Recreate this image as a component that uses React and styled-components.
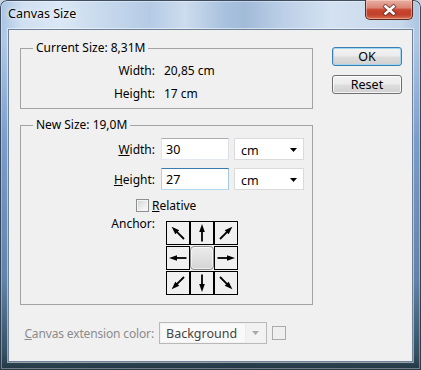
import React from "react";
import styled, { createGlobalStyle } from "styled-components";

const Global = createGlobalStyle`
  html, body { margin: 0; padding: 0; background: #c7d3df; overflow: hidden; }
  * { box-sizing: border-box; }
`;

const uiFont = `"Noto Sans", "Open Sans", "DejaVu Sans", sans-serif`;

const Window = styled.div`
  width: 421px;
  height: 370px;
  display: flex;
  flex-direction: column;
  padding: 0 8px 8px;
  border-radius: 7px 7px 0 0;
  box-shadow: inset 0 0 0 1px rgba(25, 40, 60, 0.8), inset 0 0 0 2px rgba(255, 255, 255, 0.35);
  background:
    linear-gradient(180deg, rgba(80, 120, 170, 0) 0px, rgba(80, 120, 170, 0) 40px,
      rgba(55, 105, 175, 0.45) 140px, rgba(45, 85, 130, 0.6) 280px,
      rgba(35, 62, 78, 0.88) 355px, rgba(25, 45, 55, 0.95) 370px),
    linear-gradient(90deg, #a8c3e2 0px, #cfdff1 22px, #dae7f5 60px, #c4d7ec 110px,
      #b5cbe5 150px, #cddcee 185px, #a8c1de 225px, #a2bbd9 245px, #bdd0e8 285px,
      #d3e1f1 330px, #c8d8eb 400px, #a9c3e0 421px);
`;

const TitleBar = styled.div`
  height: 29px;
  display: flex;
  justify-content: space-between;
  align-items: flex-start;
`;

const Title = styled.div`
  padding-top: 6px;
  font-family: ${uiFont};
  font-size: 12.5px;
  line-height: 15px;
  color: #000;
  text-shadow: 0 0 6px rgba(255, 255, 255, 0.95), 0 0 2px #fff;
`;

const CloseButton = styled.div`
  width: 48px;
  height: 20px;
  display: flex;
  align-items: center;
  justify-content: center;
  border: 1px solid #5a2a22;
  border-top: none;
  border-radius: 0 0 5px 5px;
  background: linear-gradient(180deg, #e9b0a3 0%, #db8676 40%, #c8452f 52%, #c2412c 78%, #d8704f 100%);
  box-shadow: inset 0 0 0 1px rgba(255, 220, 210, 0.45);
`;

const Client = styled.div`
  flex: 1;
  display: flex;
  flex-direction: column;
  background: #f0f0f0;
  border: 1px solid #6d8199;
  box-shadow: 0 0 0 1px rgba(255, 255, 255, 0.5);
  padding: 11px 10px 0 11px;
  font-family: ${uiFont};
  font-size: 12px;
  line-height: 15px;
  color: #000;
`;

const TopArea = styled.div`
  display: flex;
  align-items: flex-start;
`;

const LeftColumn = styled.div`
  width: 293px;
  display: flex;
  flex-direction: column;
  gap: 9px;
`;

const Group = styled.fieldset`
  margin: 0;
  min-width: 0;
  width: 293px;
  border: 1px solid #a3a3a3;
  padding: ${(p) => p.$pad};
`;

const Legend = styled.legend`
  margin-left: 12px;
  padding: 0 3px;
  line-height: 14px;
`;

const InfoRow = styled.div`
  display: flex;
  align-items: center;
  height: 23px;
`;

const RowLabel = styled.div`
  width: 134px;
  flex: none;
  text-align: right;
  letter-spacing: ${(p) => (p.$disabled ? "-0.15px" : "0")};
  color: ${(p) => (p.$disabled ? "#8c8c8c" : "#000")};
`;

const InfoValue = styled.div`
  margin-left: 9px;
`;

const FieldRow = styled.div`
  display: flex;
  align-items: center;
  height: 22px;
  margin-top: ${(p) => p.$top || 0}px;
`;

const TextBox = styled.input`
  width: 68px;
  height: 22px;
  margin: 0 0 0 6px;
  padding: 0 4px;
  font: inherit;
  font-size: 12.5px;
  color: #000;
  background: #fff;
  outline: none;
  border: 1px solid;
  border-color: ${(p) =>
    p.$focused ? "#3d7bad #a4c9e3 #b7d9ed #b5cfe7" : "#abadb3 #dbdfe6 #e3e9ef #e2e3ea"};
`;

const Combo = styled.div`
  width: 70px;
  height: 22px;
  margin-left: 5px;
  display: flex;
  align-items: center;
  justify-content: space-between;
  padding: 2px 6px 0 6px;
  font-size: 12.5px;
  background: #fff;
  border: 1px solid #dadada;
`;

const CheckRow = styled.div`
  display: flex;
  align-items: center;
  height: 16px;
  margin-top: 7px;
  padding-left: 115px;
  gap: 3px;
`;

const CheckBox = styled.span`
  width: 13px;
  height: 13px;
  border: 1px solid #8e8f8f;
  background: linear-gradient(135deg, #cfd1d4 0%, #eeeeee 60%, #fbfbfb 100%);
  box-shadow: inset 0 0 0 1px #f4f4f4;
`;

const AnchorRow = styled.div`
  display: flex;
  align-items: flex-start;
  margin-top: 3px;
`;

const AnchorGrid = styled.div`
  margin: 5px 0 0 11px;
  display: grid;
  grid-template-columns: repeat(3, 24px);
  grid-auto-rows: 24px;
  row-gap: 1px;
`;

const AnchorCell = styled.div`
  display: flex;
  align-items: center;
  justify-content: center;
  border: 1px solid ${(p) => (p.$selected ? "#8a8a8a" : "#000")};
  border-radius: ${(p) => (p.$selected ? "4px" : "0")};
  background: ${(p) =>
    p.$selected ? "linear-gradient(180deg, #ececec 0%, #dedede 60%, #d4d4d4 100%)" : "#f0f0f0"};
  box-shadow: ${(p) => (p.$selected ? "inset 0 0 0 1px rgba(255,255,255,0.6)" : "none")};
`;

const RightColumn = styled.div`
  margin: 6px 0 0 19px;
  display: flex;
  flex-direction: column;
  gap: 9px;
`;

const Button = styled.button`
  width: 70px;
  height: 19px;
  padding: 0;
  font: inherit;
  font-size: 12.5px;
  line-height: 15px;
  color: #000;
  border-radius: 3px;
  border: 1px solid ${(p) => (p.$default ? "#3c7fb1" : "#707070")};
  background: linear-gradient(180deg, #f3f3f3 0%, #ebebeb 48%, #dddddd 52%, #d0d0d0 100%);
  box-shadow: inset 0 0 0 1px ${(p) => (p.$default ? "#9fd7f3" : "rgba(255,255,255,0.75)")};
`;

const BottomRow = styled.div`
  display: flex;
  align-items: center;
  height: 22px;
  margin-top: 17px;
`;

const DisabledCombo = styled.div`
  width: 108px;
  height: 22px;
  margin-left: 5px;
  display: flex;
  align-items: stretch;
  padding: 1px;
  border: 1px solid #b9b9b9;
  background: #f2f2f2;
`;

const DisabledText = styled.div`
  flex: 1;
  display: flex;
  align-items: center;
  padding: 1px 0 0 5px;
  font-size: 12.5px;
  color: #444;
  background: #f9f9f9;
  border-right: 1px solid #ececec;
`;

const DisabledArrow = styled.div`
  width: 19px;
  display: flex;
  align-items: center;
  justify-content: center;
`;

const Swatch = styled.div`
  width: 14px;
  height: 14px;
  margin-left: 5px;
  border: 1px solid #ababab;
  background: #efefef;
`;

const DropArrow = ({ color = "#000" }) => (
  <svg width="7" height="4" viewBox="0 0 7 4">
    <polygon points="0,0 7,0 3.5,4" fill={color} />
  </svg>
);

const CloseGlyph = () => (
  <svg width="15" height="12" viewBox="0 0 15 12">
    <g strokeLinecap="square">
      <path d="M3.5 2.5 L11.5 9.5 M11.5 2.5 L3.5 9.5" stroke="#5b2a22" strokeWidth="4.4" opacity="0.7" />
      <path d="M3.5 2.5 L11.5 9.5 M11.5 2.5 L3.5 9.5" stroke="#ffffff" strokeWidth="2.6" />
    </g>
  </svg>
);

const Arrow = ({ angle }) => (
  <svg width="22" height="22" viewBox="0 0 22 22">
    <g transform={`rotate(${angle} 11 11)`}>
      <line x1="11" y1="8" x2="11" y2="19.5" stroke="#000" strokeWidth="1.8" />
      <polygon points="11,2 8.2,10 13.8,10" fill="#000" />
    </g>
  </svg>
);

const anchors = [-45, 0, 45, -90, null, 90, -135, 180, 135];

export default function App() {
  return (
    <>
      <Global />
      <Window>
        <TitleBar>
          <Title>Canvas Size</Title>
          <CloseButton>
            <CloseGlyph />
          </CloseButton>
        </TitleBar>
        <Client>
          <TopArea>
            <LeftColumn>
              <Group $pad="4px 0 3px">
                <Legend>Current Size: 8,31M</Legend>
                <InfoRow>
                  <RowLabel>Width:</RowLabel>
                  <InfoValue>20,85 cm</InfoValue>
                </InfoRow>
                <InfoRow>
                  <RowLabel>Height:</RowLabel>
                  <InfoValue>17 cm</InfoValue>
                </InfoRow>
              </Group>
              <Group $pad="6px 0 9px">
                <Legend>New Size: 19,0M</Legend>
                <FieldRow>
                  <RowLabel>
                    <u>W</u>idth:
                  </RowLabel>
                  <TextBox defaultValue="30" readOnly />
                  <Combo>
                    <span>cm</span>
                    <DropArrow />
                  </Combo>
                </FieldRow>
                <FieldRow $top={8}>
                  <RowLabel>
                    <u>H</u>eight:
                  </RowLabel>
                  <TextBox defaultValue="27" readOnly $focused />
                  <Combo>
                    <span>cm</span>
                    <DropArrow />
                  </Combo>
                </FieldRow>
                <CheckRow>
                  <CheckBox />
                  <span>
                    <u>R</u>elative
                  </span>
                </CheckRow>
                <AnchorRow>
                  <RowLabel>Anchor:</RowLabel>
                  <AnchorGrid>
                    {anchors.map((a, i) =>
                      a === null ? (
                        <AnchorCell key={i} $selected />
                      ) : (
                        <AnchorCell key={i}>
                          <Arrow angle={a} />
                        </AnchorCell>
                      )
                    )}
                  </AnchorGrid>
                </AnchorRow>
              </Group>
            </LeftColumn>
            <RightColumn>
              <Button $default>OK</Button>
              <Button>Reset</Button>
            </RightColumn>
          </TopArea>
          <BottomRow>
            <RowLabel $disabled>
              <u>C</u>anvas extension color:
            </RowLabel>
            <DisabledCombo>
              <DisabledText>Background</DisabledText>
              <DisabledArrow>
                <DropArrow color="#a8a8a8" />
              </DisabledArrow>
            </DisabledCombo>
            <Swatch />
          </BottomRow>
        </Client>
      </Window>
    </>
  );
}
